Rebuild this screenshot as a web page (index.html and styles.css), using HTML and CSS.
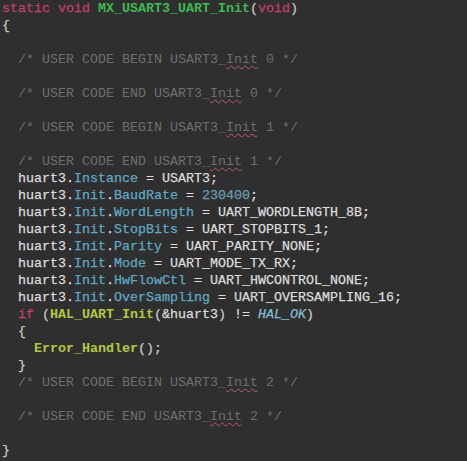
FILE: index.html
```html
<!DOCTYPE html>
<html>
<head>
<meta charset="utf-8">
<link rel="stylesheet" href="styles.css">
</head>
<body>
<pre class="code"><span class="kw">static</span> <span class="kw">void</span> <span class="fn">MX_USART3_UART_Init</span><span class="pn">(</span><span class="kw">void</span><span class="pn">)</span>
<span class="pn">{</span>

  <span class="cm">/* USER CODE BEGIN USART3_<span class="sp">Init</span> 0 */</span>

  <span class="cm">/* USER CODE END USART3_<span class="sp">Init</span> 0 */</span>

  <span class="cm">/* USER CODE BEGIN USART3_<span class="sp">Init</span> 1 */</span>

  <span class="cm">/* USER CODE END USART3_<span class="sp">Init</span> 1 */</span>
  huart3.<span class="fd">Instance</span> = USART3;
  huart3.<span class="fd">Init</span>.<span class="fd">BaudRate</span> = <span class="nm">230400</span>;
  huart3.<span class="fd">Init</span>.<span class="fd">WordLength</span> = UART_WORDLENGTH_8B;
  huart3.<span class="fd">Init</span>.<span class="fd">StopBits</span> = UART_STOPBITS_1;
  huart3.<span class="fd">Init</span>.<span class="fd">Parity</span> = UART_PARITY_NONE;
  huart3.<span class="fd">Init</span>.<span class="fd">Mode</span> = UART_MODE_TX_RX;
  huart3.<span class="fd">Init</span>.<span class="fd">HwFlowCtl</span> = UART_HWCONTROL_NONE;
  huart3.<span class="fd">Init</span>.<span class="fd">OverSampling</span> = UART_OVERSAMPLING_16;
  <span class="kw">if</span> <span class="pn">(</span><span class="call">HAL_UART_Init</span><span class="pn">(</span>&amp;huart3<span class="pn">)</span> != <span class="en">HAL_OK</span><span class="pn">)</span>
  <span class="pn">{</span>
    <span class="call">Error_Handler</span><span class="pn">();</span>
  <span class="pn">}</span>
  <span class="cm">/* USER CODE BEGIN USART3_<span class="sp">Init</span> 2 */</span>

  <span class="cm">/* USER CODE END USART3_<span class="sp">Init</span> 2 */</span>

<span class="pn">}</span></pre>
</body>
</html>
```
FILE: styles.css
```css
html, body {
  margin: 0;
  padding: 0;
  background: #2f2f2f;
  height: 100%;
}
.code {
  margin: 0;
  padding: 0 0 0 2px;
  font-family: "Liberation Mono", "Courier New", monospace;
  font-size: 13.33px;
  line-height: 17px;
  color: #dcdcdc;
  white-space: pre;
  -webkit-text-stroke: 0.25px currentColor;
}
.kw { color: #c23f6e; }
.fn { color: #3dbb4f; font-weight: bold; -webkit-text-stroke: 0; }
.pn { color: #c8c8c8; }
.cm { color: #6e6e6e; -webkit-text-stroke: 0; }
.sp {
  text-decoration: underline wavy #c2576a;
  text-decoration-thickness: 1px;
  text-underline-offset: 2px;
}
.fd { color: #5eaac8; }
.nm { color: #6c9eb8; }
.en { color: #82bfd6; font-style: italic; }
.call { color: #b4c83c; font-weight: bold; -webkit-text-stroke: 0; }
```
